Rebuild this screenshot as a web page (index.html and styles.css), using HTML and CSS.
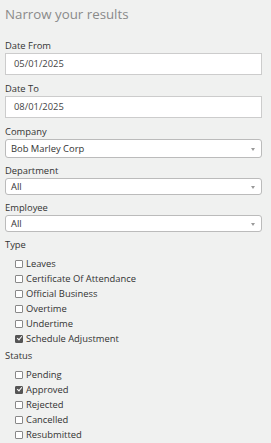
FILE: index.html
```html
<!DOCTYPE html>
<html lang="en">
<head>
    <meta charset="UTF-8">
    <meta name="viewport" content="width=device-width, initial-scale=1.0">
    <title>Narrow your results</title>
    <link rel="stylesheet" href="styles.css">
</head>
<body>
    <div class="filter-panel">
        <div class="panel-title">Narrow your results</div>
        <div class="field date">
            <label class="field-label">Date From</label>
            <div class="text-box">05/01/2025</div>
        </div>
        <div class="field date">
            <label class="field-label">Date To</label>
            <div class="text-box">08/01/2025</div>
        </div>
        <div class="field">
            <label class="field-label">Company</label>
            <div class="select-box company">Bob Marley Corp<span class="caret"></span></div>
        </div>
        <div class="field">
            <label class="field-label">Department</label>
            <div class="select-box">All<span class="caret"></span></div>
        </div>
        <div class="field">
            <label class="field-label">Employee</label>
            <div class="select-box">All<span class="caret"></span></div>
        </div>
        <div class="group">
            <div class="group-label">Type</div>
            <ul class="check-list">
                <li><span class="box"></span>Leaves</li>
                <li><span class="box"></span>Certificate Of Attendance</li>
                <li><span class="box"></span>Official Business</li>
                <li><span class="box"></span>Overtime</li>
                <li><span class="box"></span>Undertime</li>
                <li><span class="box checked"></span>Schedule Adjustment</li>
            </ul>
        </div>
        <div class="group">
            <div class="group-label">Status</div>
            <ul class="check-list">
                <li><span class="box"></span>Pending</li>
                <li><span class="box checked"></span>Approved</li>
                <li><span class="box"></span>Rejected</li>
                <li><span class="box"></span>Cancelled</li>
                <li><span class="box"></span>Resubmitted</li>
            </ul>
        </div>
    </div>
</body>
</html>
```

FILE: styles.css
```css
body {
    margin: 0;
    padding: 0;
    background: #f0f1f0;
    font-family: "Open Sans", Arial, sans-serif;
    font-size: 9.4px;
    color: #333;
}
.filter-panel {
    padding: 5px 9px 0 5px;
}
.panel-title {
    font-size: 13.3px;
    color: #8a8a8a;
    line-height: 18px;
    margin-bottom: 17px;
}
.field {
    display: flex;
    flex-direction: column;
    margin-bottom: 7px;
}
.field.date {
    margin-bottom: 8px;
}
.field-label {
    line-height: 12px;
    margin-bottom: 1px;
}
.text-box {
    background: #fff;
    border: 1px solid #ccc;
    height: 20px;
    line-height: 20px;
    padding: 0 8px;
    color: #444;
}
.select-box {
    position: relative;
    background: #fff;
    border: 1px solid #bbb;
    border-radius: 3px;
    height: 15px;
    line-height: 15px;
    padding: 0 5px;
    color: #333;
}
.select-box.company {
    height: 17px;
    line-height: 17px;
}
.caret {
    position: absolute;
    right: 6px;
    top: 50%;
    margin-top: -1px;
    border-left: 2.5px solid transparent;
    border-right: 2.5px solid transparent;
    border-top: 3px solid #999;
}
.group {
    margin-top: 3px;
}
.group-label {
    line-height: 12px;
    margin-bottom: 5px;
}
.check-list {
    list-style: none;
    margin: 0 0 4px;
    padding: 0 0 0 10px;
}
.check-list li {
    display: flex;
    align-items: center;
    height: 15px;
}
.box {
    width: 6px;
    height: 6px;
    border: 1px solid #888;
    border-radius: 1px;
    background: #fff;
    margin-right: 3px;
    position: relative;
}
.box.checked {
    background: #555;
    border-color: #555;
}
.box.checked::after {
    content: "";
    position: absolute;
    left: 1.5px;
    top: -0.5px;
    width: 2px;
    height: 4px;
    border: solid #fff;
    border-width: 0 1px 1px 0;
    transform: rotate(40deg);
}
```
